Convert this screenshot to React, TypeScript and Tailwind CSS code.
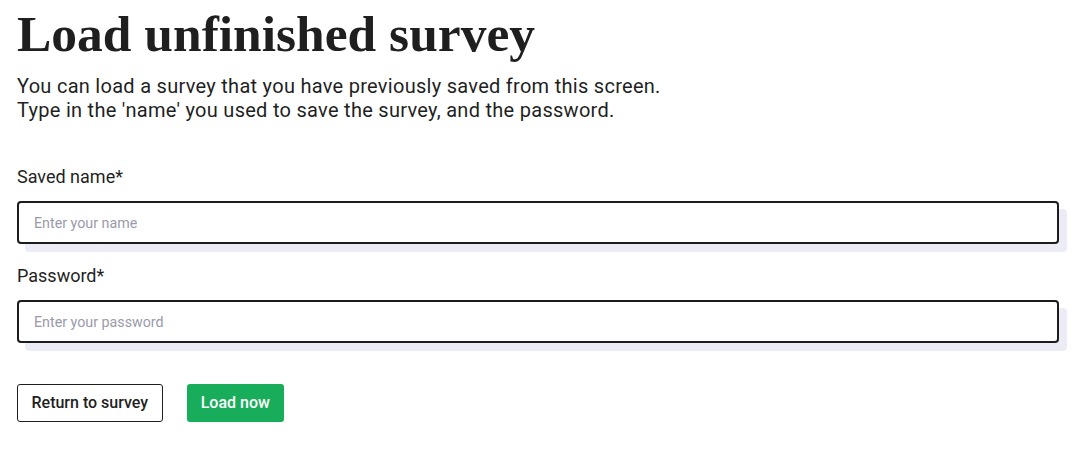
import React from 'react';

const Field = ({ label, placeholder, type = 'text' }: { label: string; placeholder: string; type?: string }) => (
  <div className="flex flex-col">
    <label className="text-[18px] leading-[24px] text-[#1f1f1f] mb-[12px]">{label}</label>
    <div className="relative">
      <div className="absolute left-[8px] top-[8px] right-[-8px] bottom-[-8px] rounded-[4px] bg-[#ececf6]" />
      <input
        type={type}
        placeholder={placeholder}
        className="relative w-full h-[43px] rounded-[4px] border-2 border-[#1c1c1c] bg-white px-[15px] text-[14.25px] text-[#1f1f1f] placeholder:text-[#9a9aab] outline-none"
      />
    </div>
  </div>
);

export default function App() {
  return (
    <div className="min-h-screen bg-white pl-[17px] pr-[20px] pt-[4px]" style={{ fontFamily: 'Roboto, sans-serif' }}>
      <h1
        className="text-[51.5px] leading-[60px] font-bold text-[#1f1f1f]"
        style={{ fontFamily: '"Liberation Serif", serif' }}
      >
        Load unfinished survey
      </h1>
      <p className="mt-[10px] text-[20px] leading-[24px] tracking-[0.28px] text-[#1f1f1f]">
        You can load a survey that you have previously saved from this screen.
        <br />
        Type in the 'name' you used to save the survey, and the password.
      </p>
      <div className="mt-[43px] flex flex-col gap-[20px]">
        <Field label="Saved name*" placeholder="Enter your name" />
        <Field label="Password*" placeholder="Enter your password" type="password" />
      </div>
      <div className="mt-[41px] flex gap-[24px]">
        <button className="h-[38px] px-[13.5px] rounded-[3px] border border-[#1f1f1f] bg-white text-[16px] font-medium text-[#1f1f1f]">
          Return to survey
        </button>
        <button className="h-[38px] px-[14px] rounded-[3px] bg-[#17ad5a] text-[16px] font-medium text-white">
          Load now
        </button>
      </div>
    </div>
  );
}
